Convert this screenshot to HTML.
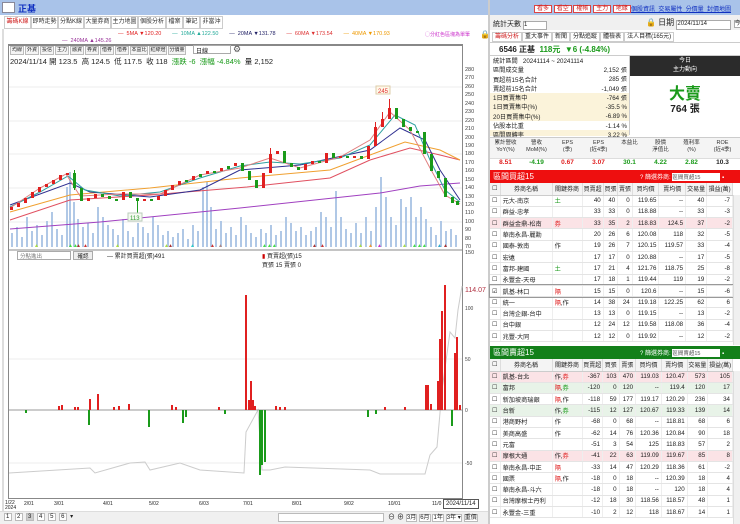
<!DOCTYPE html>
<html><head><meta charset="utf-8">
<style>
*{margin:0;padding:0;box-sizing:border-box}
body{width:740px;height:524px;overflow:hidden;background:#fff;font-family:"Liberation Sans","Noto Sans CJK TC",sans-serif;font-size:7px;color:#222;position:relative}
.a{position:absolute;white-space:nowrap}
.tab{position:absolute;top:16px;height:13px;border:1px solid #ccc;background:#fff;font-size:6px;line-height:11px;text-align:center;color:#333;white-space:nowrap;overflow:hidden}
.btn{position:absolute;height:9px;border:1px solid #bbb;background:#f4f4f4;font-size:5px;line-height:7px;text-align:center;top:46px;width:14px;white-space:nowrap;overflow:hidden}
table{border-collapse:collapse;position:absolute;left:490px;width:243px;font-size:6.2px}
td{height:11.3px;border-bottom:1px solid #e4e4e4;border-right:1px solid #eee;text-align:right;padding:0 2px;white-space:nowrap}
td:nth-child(1){width:10px}td:nth-child(2){text-align:left;width:52px}td:nth-child(3){text-align:left;width:30px}
th{height:12px;font-weight:normal;background:#f4f4f4;border-right:1px solid #ddd;border-bottom:1px solid #ccc;font-size:6px;white-space:nowrap}
.pk td{background:#fbe3e6}.lg td{background:#e8f3e8}
.r{color:#e02020}.g{color:#1a9a1a}
</style></head><body>
<!-- left header -->
<div class="a" style="left:0;top:0;width:490px;height:15px;background:#a9c3e9"></div>
<div class="a" style="left:2px;top:2px;width:13px;height:11px;background:#fff;border:1px solid #889"></div>
<div class="a" style="left:18px;top:2px;font-size:9px;color:#1030c0;font-weight:bold">正基</div>
<div class="tab" style="left:4px;width:27px;color:#d02020">籌碼K線</div>
<div class="tab" style="left:31px;width:27px">即時走勢</div>
<div class="tab" style="left:58px;width:26px">分點K線</div>
<div class="tab" style="left:84px;width:27px">大量券商</div>
<div class="tab" style="left:111px;width:27px">主力地圖</div>
<div class="tab" style="left:138px;width:28px">個股分析</div>
<div class="tab" style="left:166px;width:17px">檔案</div>
<div class="tab" style="left:183px;width:17px">筆記</div>
<div class="tab" style="left:200px;width:23px">非當沖</div>
<div class="a" style="left:2px;top:29px;width:2px;height:495px;background:#ddd"></div>
<div class="a" style="left:118px;top:31px;font-size:5.5px"><span class="r">— &nbsp;5MA ▼120.20</span> &nbsp;&nbsp;&nbsp;&nbsp;&nbsp; <span style="color:#2a9">— &nbsp;10MA ▲122.50</span> &nbsp;&nbsp;&nbsp;&nbsp;&nbsp; <span style="color:#226">— &nbsp;20MA ▼131.78</span> &nbsp;&nbsp;&nbsp;&nbsp;&nbsp; <span style="color:#d33">— &nbsp;60MA ▼173.54</span> &nbsp;&nbsp;&nbsp;&nbsp;&nbsp; <span style="color:#e90">— &nbsp;40MA ▼170.93</span></div>
<div class="a" style="left:62px;top:38px;font-size:5.5px;color:#939">— &nbsp;240MA ▲145.26</div>
<div class="a" style="left:425px;top:31px;font-size:5px;color:#c3c">◯分紅色區塊為單筆</div>
<div class="a" style="left:480px;top:30px;font-size:8px">🔒</div>
<div class="a" style="left:8px;top:44px;width:455px;height:455px;border:1px solid #888;border-top-width:2px"></div>
<div class="btn" style="left:10px">均線</div><div class="btn" style="left:25px">外資</div><div class="btn" style="left:40px">投信</div><div class="btn" style="left:55px">主力</div><div class="btn" style="left:70px">融資</div><div class="btn" style="left:85px">券資</div><div class="btn" style="left:100px">借券</div><div class="btn" style="left:115px">借券</div><div class="btn" style="left:130px;width:18px">本益比</div><div class="btn" style="left:149px;width:18px">紅綠燈</div><div class="btn" style="left:168px;width:18px">分價量</div>
<div class="a" style="left:193px;top:45px;width:38px;height:9px;border:1px solid #aaa;font-size:6px;padding-left:2px">日線</div>
<div class="a" style="left:233px;top:44px;font-size:9px;color:#555">⚙</div>
<div class="a" style="left:10px;top:56px;font-size:7.5px">2024/11/14 開 123.5 &nbsp;高 124.5 &nbsp;低 117.5 &nbsp;收 118 &nbsp;<span class="g">漲跌 -6 &nbsp;漲幅 -4.84%</span> &nbsp;量 2,152</div>
<!-- axis labels -->
<div class="a" style="left:465px;top:66px;font-size:5.5px;line-height:8.43px;color:#444">280<br>270<br>260<br>250<br>240<br>230<br>220<br>210<br>200<br>190<br>180<br>170<br>160<br>150<br>140<br>130<br>120<br>110<br>100<br>90<br>80<br>70</div>
<div class="a" style="left:465px;top:250px;font-size:5.5px;color:#444">150</div>
<svg class="a" style="left:0;top:0" width="490" height="524">
<g stroke="#eee" stroke-width="1"><line x1="9" y1="87" x2="462" y2="87"/><line x1="9" y1="121" x2="462" y2="121"/><line x1="9" y1="154" x2="462" y2="154"/><line x1="9" y1="188" x2="462" y2="188"/><line x1="9" y1="222" x2="462" y2="222"/><line x1="9" y1="359" x2="462" y2="359"/><line x1="9" y1="463" x2="462" y2="463"/></g>
<path stroke="#b0c8e6" stroke-width="2" fill="none" d="M12 247v-14M17 247v-20M22 247v-10M27 247v-30M32 247v-16M37 247v-22M42 247v-12M47 247v-26M52 247v-35M57 247v-18M62 247v-12M67 247v-60M70 247v-75M74 247v-45M78 247v-28M83 247v-20M88 247v-24M93 247v-14M98 247v-40M103 247v-30M108 247v-22M113 247v-18M118 247v-12M123 247v-28M128 247v-16M133 247v-10M138 247v-24M143 247v-20M148 247v-14M153 247v-30M158 247v-22M163 247v-12M168 247v-16M173 247v-10M178 247v-14M183 247v-18M188 247v-8M193 247v-22M198 247v-16M203 247v-60M207 247v-65M211 247v-40M216 247v-18M221 247v-26M226 247v-14M231 247v-20M236 247v-12M241 247v-30M246 247v-22M251 247v-14M256 247v-10M261 247v-18M266 247v-14M271 247v-22M276 247v-12M281 247v-16M286 247v-30M291 247v-24M296 247v-16M301 247v-20M306 247v-12M311 247v-16M316 247v-20M321 247v-35M326 247v-30M331 247v-20M336 247v-56M341 247v-30M346 247v-18M351 247v-14M356 247v-24M361 247v-14M366 247v-30M371 247v-16M376 247v-40M381 247v-70M386 247v-50M391 247v-30M396 247v-22M401 247v-48M406 247v-40M411 247v-50M416 247v-30M421 247v-40M426 247v-28M431 247v-20M436 247v-12M441 247v-26M446 247v-16M451 247v-18M456 247v-12"/>
<g fill="none" stroke-width="1">
<polyline stroke="#a040c0" points="10,229 100,222 240,208 380,193 420,186 460,183"/>
<polyline stroke="#e05060" points="10,220 70,200 150,195 247,187 330,178 370,160 410,148 440,155 460,160"/>
<polyline stroke="#f0a030" points="10,212 70,195 150,188 240,178 330,170 370,155 405,142 440,150 460,160"/>
<polyline stroke="#303090" points="10,205 70,183 90,192 150,197 200,190 240,170 300,165 370,150 400,128 425,140 440,170 460,200"/>
<polyline stroke="#30a0a0" points="10,207 40,192 68,176 85,190 120,196 160,192 200,178 240,166 270,162 300,164 340,158 370,145 395,115 415,125 430,160 445,190 460,202"/>
<polyline stroke="#e08080" points="10,208 40,188 66,174 80,196 120,194 160,194 200,175 240,168 270,158 300,168 340,157 370,140 390,112 410,130 430,168 445,195 460,204"/>
</g>
<g fill="#e02020">
<rect x="10" y="207" width="3" height="3"/><rect x="17" y="203" width="3" height="4"/><rect x="24" y="198" width="3" height="5"/><rect x="31" y="192" width="3" height="6"/><rect x="38" y="187" width="3" height="5"/><rect x="45" y="184" width="3" height="3"/><rect x="52" y="180" width="3" height="4"/><rect x="59" y="175" width="3" height="5"/><rect x="66" y="173" width="3" height="2"/><rect x="87" y="198" width="3" height="3"/><rect x="94" y="194" width="3" height="4"/><rect x="122" y="192" width="3" height="8"/><rect x="143" y="199" width="3" height="2"/><rect x="157" y="196" width="3" height="4"/><rect x="164" y="190" width="3" height="6"/><rect x="171" y="185" width="3" height="5"/><rect x="178" y="181" width="3" height="4"/><rect x="192" y="176" width="3" height="4"/><rect x="206" y="171" width="3" height="3"/><rect x="220" y="168" width="3" height="3"/><rect x="234" y="163" width="3" height="3"/><rect x="262" y="173" width="3" height="15"/><rect x="269" y="154" width="3" height="19"/><rect x="276" y="151" width="3" height="3"/><rect x="304" y="164" width="3" height="6"/><rect x="311" y="161" width="3" height="3"/><rect x="325" y="153" width="3" height="10"/><rect x="339" y="156" width="3" height="2"/><rect x="353" y="156" width="3" height="2"/><rect x="367" y="146" width="3" height="13"/><rect x="374" y="127" width="3" height="19"/><rect x="381" y="119" width="3" height="8"/><rect x="388" y="108" width="3" height="11"/>
</g>
<path stroke="#e02020" d="M389.5 99v9M382.5 112v7M375.5 122v5M270.5 148v6"/>
<g fill="#1a9a1a">
<rect x="73" y="173" width="3" height="15"/><rect x="80" y="188" width="3" height="13"/><rect x="101" y="194" width="3" height="3"/><rect x="108" y="196" width="3" height="3"/><rect x="115" y="199" width="3" height="2"/><rect x="129" y="192" width="3" height="6"/><rect x="136" y="198" width="3" height="3"/><rect x="150" y="199" width="3" height="2"/><rect x="185" y="180" width="3" height="2"/><rect x="199" y="174" width="3" height="3"/><rect x="213" y="171" width="3" height="2"/><rect x="227" y="166" width="3" height="3"/><rect x="241" y="163" width="3" height="8"/><rect x="248" y="171" width="3" height="9"/><rect x="255" y="180" width="3" height="8"/><rect x="283" y="151" width="3" height="12"/><rect x="290" y="163" width="3" height="4"/><rect x="297" y="167" width="3" height="3"/><rect x="318" y="161" width="3" height="2"/><rect x="332" y="153" width="3" height="5"/><rect x="346" y="156" width="3" height="2"/><rect x="360" y="156" width="3" height="3"/><rect x="395" y="108" width="3" height="11"/><rect x="402" y="119" width="3" height="8"/><rect x="409" y="127" width="3" height="4"/><rect x="416" y="131" width="3" height="2"/><rect x="423" y="132" width="3" height="22"/><rect x="430" y="154" width="3" height="17"/><rect x="437" y="171" width="3" height="7"/><rect x="444" y="178" width="3" height="19"/><rect x="451" y="197" width="3" height="6"/><rect x="456" y="201" width="3" height="4"/>
</g>
<path stroke="#1a9a1a" d="M137.5 201v12M74.5 170v20"/>
<rect x="376" y="86" width="14" height="8" fill="#fff8e8" stroke="#dca"/>
<text x="378" y="93" font-size="6" fill="#e03030" font-family="Liberation Sans">245</text>
<rect x="128" y="213" width="14" height="8" fill="#f4faf0" stroke="#bcb"/>
<text x="130" y="220" font-size="6" fill="#393" font-family="Liberation Sans">113</text>
<g font-size="5"><text x="34" y="247" fill="#aadd44">▲</text><text x="68" y="247" fill="#44dd44">▲▲</text><text x="76" y="247" fill="#a33">▲</text><text x="83" y="247" fill="#c33">▲</text><text x="115" y="247" fill="#ad4">▲</text><text x="164" y="247" fill="#ad4">▲</text><text x="168" y="247" fill="#a33">▲</text><text x="190" y="247" fill="#3cc">▲</text><text x="210" y="247" fill="#c33">▲</text><text x="218" y="247" fill="#a88">▲</text><text x="262" y="247" fill="#4d4">▲▲▲</text><text x="312" y="247" fill="#a33">▲</text><text x="320" y="247" fill="#c33">▲</text><text x="358" y="247" fill="#ad4">▲</text><text x="368" y="247" fill="#e93">▲</text><text x="377" y="247" fill="#c3c">▲</text><text x="402" y="247" fill="#ad4">▲</text><text x="412" y="247" fill="#4d4">▲▲▲</text><text x="437" y="247" fill="#3ac">▲</text><text x="443" y="247" fill="#a33">▲</text></g>
<line x1="9" y1="250" x2="462" y2="250" stroke="#888"/>
<!-- lower chart -->
<polyline fill="none" stroke="#ccc" points="9,473 90,468 95,473 130,463 145,462 150,470 180,463 200,470 244,473 246,432 258,410 262,470 270,470 285,467 370,470 380,474 425,474 430,455 437,447 442,390 450,332 455,338 458,310 462,286"/>
<line x1="9" y1="410" x2="462" y2="410" stroke="#999"/>
<path stroke="#e02020" stroke-width="2" d="M246 410V295M249 410v-10M251 410v-29M253 410v-10M255 410v-4M426 410v-25M428 410v-25M431 410v-6M438 410v-29M440 410v-71M442 410v-99M445 410v-125M455 410v-57M457 410v-73M460 410v-5M59 410v-4M62 410v-5M90 410v-11M98 410v-16M75 410v-3M78 410v-3M114 410v-3M119 410v-4M129 410v-6M172 410v-5M176 410v-3M219 410v-3M276 410v-4M280 410v-3M285 410v-3M385 410v-3M405 410v-3"/>
<path stroke="#1a9a1a" stroke-width="2" d="M260 410v65M262 410v55M265 410v52M89 410v15M149 410v17M183 410v13M186 410v7M26 410v3M225 410v4M368 410v7M376 410v4M452 410v16"/>
</svg>
<div class="a" style="left:17px;top:251px;width:54px;height:9px;border:1px solid #aaa;font-size:5.5px;color:#777;padding-left:2px">分點進出</div>
<div class="a" style="left:73px;top:251px;width:20px;height:9px;border:1px solid #aaa;background:#eee;font-size:5.5px;text-align:center">確認</div>
<div class="a" style="left:107px;top:251px;font-size:6px">— 累計買賣超(張)491</div>
<div class="a" style="left:262px;top:251px;font-size:6px"><span style="color:#c00">▮</span> 買賣超(張)15<br>買張 15 賣張 0</div>
<div class="a" style="left:465px;top:287px;font-size:7px;color:#b03040">114.07</div>
<div class="a" style="left:465px;top:306px;font-size:5px;color:#444">100</div>
<div class="a" style="left:465px;top:357px;font-size:5px;color:#444">50</div>
<div class="a" style="left:465px;top:408px;font-size:5px;color:#444">0</div>
<div class="a" style="left:465px;top:461px;font-size:5px;color:#444">-50</div>
<div class="a" style="left:5px;top:501px;font-size:5px;line-height:5px">1/22<br>2024</div>
<div class="a" style="top:501px;left:0;font-size:5px;width:462px;height:6px"><span class="a" style="left:24px">2/01</span><span class="a" style="left:54px">3/01</span><span class="a" style="left:103px">4/01</span><span class="a" style="left:149px">5/02</span><span class="a" style="left:199px">6/03</span><span class="a" style="left:243px">7/01</span><span class="a" style="left:292px">8/01</span><span class="a" style="left:344px">9/02</span><span class="a" style="left:388px">10/01</span><span class="a" style="left:432px">11/0</span></div>
<div class="a" style="left:443px;top:499px;border:1px solid #555;background:#fff;font-size:6px;padding:1px 2px">2024/11/14</div>
<div class="a" style="left:0;top:511px;width:490px;height:13px;background:#f0f0f0;border-top:1px solid #ddd"></div>
<div class="a" style="left:4px;top:513px;font-size:6px;letter-spacing:1px"><span style="border:1px solid #bbb;padding:0 1px;background:#fff">1</span> <span style="border:1px solid #bbb;padding:0 1px;background:#fff">2</span> <span style="border:1px solid #bbb;padding:0 1px;background:#ccc">3</span> <span style="border:1px solid #bbb;padding:0 1px;background:#fff">4</span> <span style="border:1px solid #bbb;padding:0 1px;background:#fff">5</span> <span style="border:1px solid #bbb;padding:0 1px;background:#fff">6</span> ▾</div>
<div class="a" style="left:278px;top:513px;width:106px;height:9px;border:1px solid #bbb;background:#fff"></div>
<div class="a" style="left:388px;top:512px;font-size:7px">⊖ ⊕ <span style="font-size:6px;border:1px solid #bbb;background:#fff">3月</span> <span style="font-size:6px;border:1px solid #bbb;background:#fff">6月</span> <span style="font-size:6px;border:1px solid #bbb;background:#fff">1年</span> <span style="font-size:6px;border:1px solid #bbb;background:#fff">3年 ▾</span> <span style="font-size:6px;border:1px solid #bbb;background:#fff">重價</span></div>
<div class="a" style="left:488px;top:0;width:2px;height:524px;background:#ccc"></div>
<!-- right panel -->
<div class="a" style="left:490px;top:0;width:250px;height:15px;background:#a9c3e9"></div>
<div class="a" style="left:534px;top:3px;font-size:6px;color:#d02020"><span style="border:1px solid #d44;background:#fff;padding:0 2px">看多</span> <span style="border:1px solid #d44;background:#fff;padding:0 2px">看空</span> <span style="border:1px solid #d44;background:#fff;padding:0 2px">權帳</span> <span style="border:1px solid #d44;background:#fff;padding:0 2px">主力</span> <span style="border:1px solid #d44;background:#fff;padding:0 2px">地緣</span></div>
<div class="a" style="left:631px;top:4px;font-size:6px;color:#1030c0;text-decoration:underline">個股資訊 &nbsp;交易屬性 &nbsp;分價量 &nbsp;封價地圖</div>
<div class="a" style="left:490px;top:15px;width:250px;height:15px;background:#f0f0f0"></div>
<div class="a" style="left:493px;top:19px;font-size:7px">統計天數 <span style="display:inline-block;width:24px;height:9px;border:1px solid #aaa;background:#fff;font-size:6px">1</span></div>
<div class="a" style="left:646px;top:17px;font-size:8px">🔒 日期 <span style="display:inline-block;width:55px;height:10px;border:1px solid #aaa;background:#fff;font-size:6px">2024/11/14</span> <span style="border:1px solid #aaa;background:#fff;font-size:6px">今天</span></div>
<div class="a" style="left:492px;top:31px;font-size:6px"><span style="border:1px solid #ccc;padding:1px 2px;color:#d02020">籌碼分析</span><span style="border:1px solid #ccc;padding:1px 2px">重大事件</span><span style="border:1px solid #ccc;padding:1px 2px">新聞</span><span style="border:1px solid #ccc;padding:1px 2px">分點追蹤</span><span style="border:1px solid #ccc;padding:1px 2px">體檢表</span><span style="border:1px solid #ccc;padding:1px 2px">法人目標(165元)</span></div>
<div class="a" style="left:490px;top:42px;width:250px;height:14px;border-top:1px solid #ccc;border-bottom:1px solid #ccc"></div>
<div class="a" style="left:499px;top:44px;font-size:8px;font-weight:bold">6546 正基 &nbsp;<span class="g">118元 &nbsp;▼6 (-4.84%)</span></div>
<div class="a" style="left:490px;top:56px;width:140px;height:79px;border-right:1px solid #ccc"></div>
<div class="a" style="left:490px;top:93px;width:139px;height:28px;background:#fbf3da"></div>
<div class="a" style="left:490px;top:130px;width:139px;height:6px;background:#fbf3da"></div>
<div class="a" style="left:493px;top:57px;font-size:6.2px;line-height:9.3px">統計區間 &nbsp;&nbsp;20241114 ~ 20241114<br>區間成交量<br>買超前15名合計<br>賣超前15名合計<br>1日買賣集中<br>1日買賣集中(%)<br>20日買賣集中(%)<br>佔股本比重<br>區間周轉率</div>
<div class="a" style="left:570px;top:66px;width:57px;text-align:right;font-size:6.2px;line-height:9.3px">2,152 張<br>285 張<br>-1,049 張<br>-764 張<br>-35.5 %<br>-6.89 %<br>-1.14 %<br>3.22 %</div>
<div class="a" style="left:630px;top:56px;width:110px;height:20px;background:#2b2b2b;color:#fff;font-size:6px;text-align:center;line-height:9px;padding-top:1px">今日<br>主力動向</div>
<div class="a" style="left:630px;top:80px;width:110px;text-align:center;font-size:16px;font-weight:bold;color:#1a9a1a">大賣</div>
<div class="a" style="left:630px;top:100px;width:110px;text-align:center;font-size:10px;font-weight:bold">764 張</div>
<div class="a" style="left:490px;top:137px;width:250px;height:22px;background:#f4f4f4;border-top:1px solid #ccc;border-bottom:1px solid #ddd"></div>
<div class="a" style="left:490px;top:140px;width:250px;font-size:5.5px;line-height:7px;color:#333;display:flex;text-align:center"><span style="width:31px">累計營收<br>YoY(%)</span><span style="width:31px">營收<br>MoM(%)</span><span style="width:31px">EPS<br>(季)</span><span style="width:31px">EPS<br>(近4季)</span><span style="width:31px">本益比<br>&nbsp;</span><span style="width:31px">股價<br>淨值比</span><span style="width:31px">殖利率<br>(%)</span><span style="width:31px">ROE<br>(近4季)</span></div>
<div class="a" style="left:490px;top:159px;width:250px;font-size:6.5px;font-weight:bold;display:flex;text-align:center"><span style="width:31px" class="r">8.51</span><span style="width:31px" class="g">-4.19</span><span style="width:31px" class="r">0.67</span><span style="width:31px" class="r">3.07</span><span style="width:31px" class="g">30.1</span><span style="width:31px" class="g">4.22</span><span style="width:31px" class="g">2.82</span><span style="width:31px">10.3</span></div>
<div class="a" style="left:490px;top:170px;width:250px;height:13px;background:#ee0f0f"></div>
<div class="a" style="left:493px;top:171px;font-size:8px;color:#fff">區間買超15</div>
<div class="a" style="left:640px;top:172px;font-size:6px;color:#fff">? 篩選券商: <span style="display:inline-block;width:48px;height:8px;background:#fff;color:#555;font-size:5.5px">區間買超15</span> ▪</div>
<table style="top:183px">
<tr><th>☐</th><th>券商名稱</th><th>關鍵券商</th><th>買賣超</th><th>買張</th><th>賣張</th><th>買均價</th><th>賣均價</th><th>交易量</th><th>損益(萬)</th></tr>
<tr><td>☐</td><td>元大-南京</td><td class="g">土</td><td>40</td><td>40</td><td>0</td><td>119.65</td><td>--</td><td>40</td><td>-7</td></tr>
<tr><td>☐</td><td>群益-忠孝</td><td></td><td>33</td><td>33</td><td>0</td><td>118.88</td><td>--</td><td>33</td><td>-3</td></tr>
<tr class="pk"><td>☐</td><td>群益金鼎-松南</td><td class="r">券</td><td>33</td><td>35</td><td>2</td><td>118.83</td><td>124.5</td><td>37</td><td>-2</td></tr>
<tr><td>☐</td><td>華南永昌-麗勳</td><td></td><td>20</td><td>26</td><td>6</td><td>120.08</td><td>118</td><td>32</td><td>-5</td></tr>
<tr><td>☐</td><td>國泰-敦南</td><td>作</td><td>19</td><td>26</td><td>7</td><td>120.15</td><td>119.57</td><td>33</td><td>-4</td></tr>
<tr><td>☐</td><td>宏遠</td><td></td><td>17</td><td>17</td><td>0</td><td>120.88</td><td>--</td><td>17</td><td>-5</td></tr>
<tr><td>☐</td><td>富邦-建國</td><td class="g">土</td><td>17</td><td>21</td><td>4</td><td>121.76</td><td>118.75</td><td>25</td><td>-8</td></tr>
<tr><td>☐</td><td>永豐金-天母</td><td></td><td>17</td><td>18</td><td>1</td><td>119.44</td><td>119</td><td>19</td><td>-2</td></tr>
<tr style="outline:1px solid #999"><td>☑</td><td>凱基-林口</td><td class="r">隔</td><td>15</td><td>15</td><td>0</td><td>120.6</td><td>--</td><td>15</td><td>-6</td></tr>
<tr><td>☐</td><td>統一</td><td><span class="r">隔</span>,作</td><td>14</td><td>38</td><td>24</td><td>119.18</td><td>122.25</td><td>62</td><td>6</td></tr>
<tr><td>☐</td><td>台灣企銀-台中</td><td></td><td>13</td><td>13</td><td>0</td><td>119.15</td><td>--</td><td>13</td><td>-2</td></tr>
<tr><td>☐</td><td>台中銀</td><td></td><td>12</td><td>24</td><td>12</td><td>119.58</td><td>118.08</td><td>36</td><td>-4</td></tr>
<tr><td>☐</td><td>兆豐-大同</td><td></td><td>12</td><td>12</td><td>0</td><td>119.92</td><td>--</td><td>12</td><td>-2</td></tr>
</table>
<div class="a" style="left:490px;top:346px;width:250px;height:13px;background:#13801a"></div>
<div class="a" style="left:493px;top:347px;font-size:8px;color:#fff">區間賣超15</div>
<div class="a" style="left:640px;top:348px;font-size:6px;color:#fff">? 篩選券商: <span style="display:inline-block;width:48px;height:8px;background:#fff;color:#555;font-size:5.5px">區間賣超15</span> ▪</div>
<table style="top:359px">
<tr><th>☐</th><th>券商名稱</th><th>關鍵券商</th><th>買賣超</th><th>買張</th><th>賣張</th><th>買均價</th><th>賣均價</th><th>交易量</th><th>損益(萬)</th></tr>
<tr class="pk"><td>☐</td><td>凱基-台北</td><td>作,<span class="r">券</span></td><td>-367</td><td>103</td><td>470</td><td>119.03</td><td>120.47</td><td>573</td><td>105</td></tr>
<tr class="lg"><td>☐</td><td>富邦</td><td><span class="r">隔</span>,<span class="g">券</span></td><td>-120</td><td>0</td><td>120</td><td>--</td><td>119.4</td><td>120</td><td>17</td></tr>
<tr><td>☐</td><td>新加坡商瑞銀</td><td><span class="r">隔</span>,作</td><td>-118</td><td>59</td><td>177</td><td>119.17</td><td>120.29</td><td>236</td><td>34</td></tr>
<tr class="lg"><td>☐</td><td>台新</td><td>作,<span class="g">券</span></td><td>-115</td><td>12</td><td>127</td><td>120.67</td><td>119.33</td><td>139</td><td>14</td></tr>
<tr><td>☐</td><td>港商野村</td><td>作</td><td>-68</td><td>0</td><td>68</td><td>--</td><td>118.81</td><td>68</td><td>6</td></tr>
<tr><td>☐</td><td>美商高盛</td><td>作</td><td>-62</td><td>14</td><td>76</td><td>120.36</td><td>120.84</td><td>90</td><td>18</td></tr>
<tr><td>☐</td><td>元富</td><td></td><td>-51</td><td>3</td><td>54</td><td>125</td><td>118.83</td><td>57</td><td>2</td></tr>
<tr class="pk"><td>☐</td><td>摩根大通</td><td>作,<span class="r">券</span></td><td>-41</td><td>22</td><td>63</td><td>119.09</td><td>119.67</td><td>85</td><td>8</td></tr>
<tr><td>☐</td><td>華南永昌-中正</td><td class="r">隔</td><td>-33</td><td>14</td><td>47</td><td>120.29</td><td>118.36</td><td>61</td><td>-2</td></tr>
<tr><td>☐</td><td>國票</td><td><span class="r">隔</span>,作</td><td>-18</td><td>0</td><td>18</td><td>--</td><td>120.39</td><td>18</td><td>4</td></tr>
<tr><td>☐</td><td>華南永昌-斗六</td><td></td><td>-18</td><td>0</td><td>18</td><td>--</td><td>120</td><td>18</td><td>4</td></tr>
<tr><td>☐</td><td>台灣摩根士丹利</td><td></td><td>-12</td><td>18</td><td>30</td><td>118.56</td><td>118.57</td><td>48</td><td>1</td></tr>
<tr><td>☐</td><td>永豐金-三重</td><td></td><td>-10</td><td>2</td><td>12</td><td>118</td><td>118.67</td><td>14</td><td>1</td></tr>
</table>
<div class="a" style="left:733px;top:195px;width:7px;height:150px;background:#f0f0f0;border-left:1px solid #ddd"></div>
<div class="a" style="left:733px;top:371px;width:7px;height:153px;background:#f0f0f0;border-left:1px solid #ddd"></div>
</body></html>
